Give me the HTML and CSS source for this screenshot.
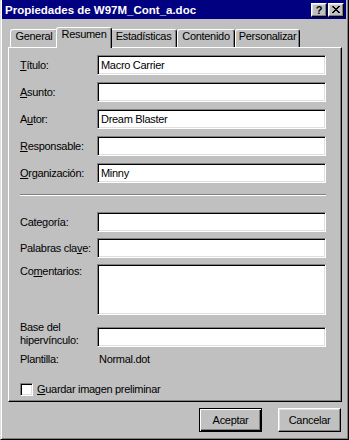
FILE: index.html
```html
<!DOCTYPE html>
<html lang="es">
<head>
  <meta charset="UTF-8">
  <title>Propiedades de W97M_Cont_a.doc</title>
  <link rel="stylesheet" href="styles.css">
</head>
<body>
  <div class="window">
    <div class="titlebar">
      <span class="title">Propiedades de W97M_Cont_a.doc</span>
      <div class="caption-btns">
        <div class="cap-btn help">?</div>
        <div class="cap-btn close">
          <svg width="8" height="7" viewBox="0 0 8 7">
            <path d="M0 0h2v1h1v1h2v-1h1v-1h2v1h-1v1h-1v1h-1v1h1v1h1v1h1v1h-2v-1h-1v-1h-2v1h-1v1h-2v-1h1v-1h1v-1h1v-1h-1v-1h-1z" fill="#000"/>
          </svg>
        </div>
      </div>
    </div>

    <!-- Tabs -->
    <div class="tabs">
      <div class="tab tab-general">General</div>
      <div class="tab tab-resumen active">Resumen</div>
      <div class="tab tab-estad">Estadísticas</div>
      <div class="tab tab-conten">Contenido</div>
      <div class="tab tab-person">Personalizar</div>
    </div>

    <div class="panel">
      <div class="fields upper">
        <label><u>T</u>ítulo:</label>
        <input class="text" type="text" value="Macro Carrier">
        <label><u>A</u>sunto:</label>
        <input class="text" type="text" value="">
        <label>A<u>u</u>tor:</label>
        <input class="text" type="text" value="Dream Blaster">
        <label><u>R</u>esponsable:</label>
        <input class="text" type="text" value="">
        <label><u>O</u>rganización:</label>
        <input class="text" type="text" value="Minny">
      </div>

      <div class="separator"></div>

      <div class="fields lower">
        <label>Cate<u>g</u>oría:</label>
        <input class="text" type="text" value="">
        <label>Palabras cla<u>v</u>e:</label>
        <input class="text" type="text" value="">
        <label class="top">Co<u>m</u>entarios:</label>
        <textarea class="text area"></textarea>
        <label class="two-line">Base del<br>hipervínculo:</label>
        <input class="text bottom" type="text" value="">
        <label>Plantilla:</label>
        <span class="value">Normal.dot</span>
      </div>

      <div class="check-row">
        <span class="checkbox"></span>
        <span><u>G</u>uardar imagen preliminar</span>
      </div>
    </div>

    <div class="buttons">
      <div class="btn default">Aceptar</div>
      <div class="btn">Cancelar</div>
    </div>
  </div>
</body>
</html>
```

FILE: styles.css
```css
body {
  margin: 0;
  background: #c0c0c0;
  font-family: "Liberation Sans", Arial, sans-serif;
  font-size: 11px;
  letter-spacing: -0.3px;
  color: #000;
}

.window {
  box-sizing: border-box;
  width: 349px;
  height: 440px;
  background: #c0c0c0;
  border: 1px solid;
  border-top: 0;
  border-color: #dfdfdf #000 #000 #dfdfdf;
  box-shadow: inset 1px 0 #fff, inset -1px -1px #808080;
  padding: 0 2px 2px 1px;
}

/* === Title bar === */
.titlebar {
  height: 19px;
  background: #000080;
  display: flex;
  align-items: center;
  justify-content: space-between;
  padding: 0 2px 0 3px;
}

.title {
  color: #fff;
  font-weight: bold;
  font-size: 11.5px;
  letter-spacing: 0;
}

.caption-btns {
  display: flex;
  gap: 1px;
}

.cap-btn {
  box-sizing: border-box;
  width: 16px;
  height: 14px;
  background: #c0c0c0;
  border: 1px solid;
  border-color: #fff #000 #000 #fff;
  box-shadow: inset -1px -1px #808080, inset 1px 1px #dfdfdf;
  display: flex;
  align-items: center;
  justify-content: center;
}

.cap-btn.help {
  font-weight: bold;
  font-size: 11px;
  line-height: 12px;
  letter-spacing: 0;
}

/* === Tabs === */
.tabs {
  display: flex;
  align-items: flex-end;
  height: 20px;
  margin: 8px 0 0 8px;
}

.tab {
  box-sizing: border-box;
  height: 18px;
  background: #c0c0c0;
  border: 1px solid;
  border-bottom: 0;
  border-color: #fff #000 #000 #fff;
  border-radius: 3px 3px 0 0;
  box-shadow: inset -1px 0 #808080;
  text-align: center;
  line-height: 13px;
}

.tab.active {
  position: relative;
  z-index: 1;
  height: 21px;
  margin: 0 -2px -1px;
}

.tab-general { width: 48px; }
.tab-resumen { width: 52px; }
.tab-resumen.active { width: 56px; }
.tab-estad { width: 67px; }
.tab-conten { width: 58px; }
.tab-person { width: 65px; }

/* === Panel === */
.panel {
  box-sizing: border-box;
  height: 355px;
  margin: 0 4px 0 6px;
  border: 1px solid;
  border-color: #fff #000 #000 #fff;
  box-shadow: inset -1px -1px #808080;
  padding: 7px 15px 0 11px;
}

.fields {
  display: grid;
  grid-template-columns: 77px 229px;
  row-gap: 7px;
  align-items: center;
}

.fields.lower {
  row-gap: 6px;
  margin-top: 16px;
}

.fields label {
  line-height: 13px;
}

.fields label.top {
  align-self: start;
  padding-top: 1px;
}

.fields label.two-line {
  line-height: 13px;
}

.text {
  box-sizing: border-box;
  height: 20px;
  width: 229px;
  margin: 0;
  padding: 0 3px;
  background: #fff;
  border: 1px solid;
  border-color: #808080 #fff #fff #808080;
  box-shadow: inset 1px 1px #000, inset -1px -1px #dfdfdf;
  font-family: inherit;
  font-size: 11px;
  letter-spacing: -0.3px;
  color: #000;
  outline: none;
}

.text.area {
  height: 51px;
  resize: none;
}

.text.bottom {
  align-self: end;
}

.value {
  padding-left: 2px;
  line-height: 13px;
}

.separator {
  margin-top: 11px;
  border-top: 1px solid #808080;
  border-bottom: 1px solid #fff;
}

.check-row {
  display: flex;
  align-items: center;
  gap: 4px;
  margin-top: 17px;
  line-height: 13px;
}

.checkbox {
  box-sizing: border-box;
  width: 13px;
  height: 13px;
  background: #fff;
  border: 1px solid;
  border-color: #808080 #fff #fff #808080;
  box-shadow: inset 1px 1px #000, inset -1px -1px #dfdfdf;
}

/* === Buttons === */
.buttons {
  display: flex;
  justify-content: flex-end;
  gap: 16px;
  margin-top: 6px;
  padding-right: 5px;
}

.btn {
  box-sizing: border-box;
  width: 63px;
  height: 24px;
  border: 1px solid;
  border-color: #fff #000 #000 #fff;
  box-shadow: inset -1px -1px #808080, inset 1px 1px #dfdfdf;
  display: flex;
  align-items: center;
  justify-content: center;
}

.btn.default {
  border-color: #000;
  box-shadow: inset 1px 1px #fff, inset -1px -1px #000, inset -2px -2px #808080;
}
```
